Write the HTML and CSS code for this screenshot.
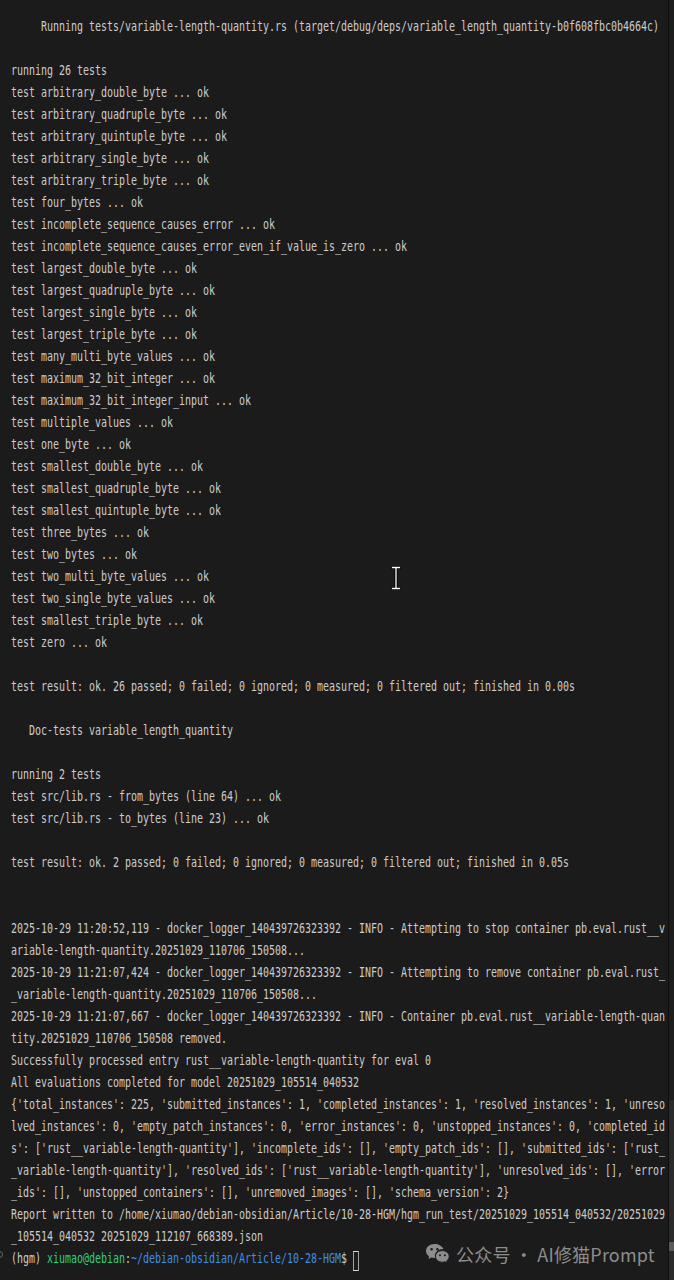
FILE: index.html
```html
<!DOCTYPE html>
<html lang="en">
<head>
<meta charset="utf-8">
<title>Terminal</title>
<link rel="stylesheet" href="styles.css">
</head>
<body>
<div class="window">
  <div class="screen">
    <div class="ln">     Running tests/variable-length-quantity.rs (target/debug/deps/variable_length_quantity-b0f608fbc0b4664c)</div>
    <div class="ln"></div>
    <div class="ln">running 26 tests</div>
    <div class="ln">test arbitrary_double_byte ... ok</div>
    <div class="ln">test arbitrary_quadruple_byte ... ok</div>
    <div class="ln">test arbitrary_quintuple_byte ... ok</div>
    <div class="ln">test arbitrary_single_byte ... ok</div>
    <div class="ln">test arbitrary_triple_byte ... ok</div>
    <div class="ln">test four_bytes ... ok</div>
    <div class="ln">test incomplete_sequence_causes_error ... ok</div>
    <div class="ln">test incomplete_sequence_causes_error_even_if_value_is_zero ... ok</div>
    <div class="ln">test largest_double_byte ... ok</div>
    <div class="ln">test largest_quadruple_byte ... ok</div>
    <div class="ln">test largest_single_byte ... ok</div>
    <div class="ln">test largest_triple_byte ... ok</div>
    <div class="ln">test many_multi_byte_values ... ok</div>
    <div class="ln">test maximum_32_bit_integer ... ok</div>
    <div class="ln">test maximum_32_bit_integer_input ... ok</div>
    <div class="ln">test multiple_values ... ok</div>
    <div class="ln">test one_byte ... ok</div>
    <div class="ln">test smallest_double_byte ... ok</div>
    <div class="ln">test smallest_quadruple_byte ... ok</div>
    <div class="ln">test smallest_quintuple_byte ... ok</div>
    <div class="ln">test three_bytes ... ok</div>
    <div class="ln">test two_bytes ... ok</div>
    <div class="ln">test two_multi_byte_values ... ok</div>
    <div class="ln">test two_single_byte_values ... ok</div>
    <div class="ln">test smallest_triple_byte ... ok</div>
    <div class="ln">test zero ... ok</div>
    <div class="ln"></div>
    <div class="ln">test result: ok. 26 passed; 0 failed; 0 ignored; 0 measured; 0 filtered out; finished in 0.00s</div>
    <div class="ln"></div>
    <div class="ln">   Doc-tests variable_length_quantity</div>
    <div class="ln"></div>
    <div class="ln">running 2 tests</div>
    <div class="ln">test src/lib.rs - from_bytes (line 64) ... ok</div>
    <div class="ln">test src/lib.rs - to_bytes (line 23) ... ok</div>
    <div class="ln"></div>
    <div class="ln">test result: ok. 2 passed; 0 failed; 0 ignored; 0 measured; 0 filtered out; finished in 0.05s</div>
    <div class="ln"></div>
    <div class="ln"></div>
    <div class="ln">2025-10-29 11:20:52,119 - docker_logger_140439726323392 - INFO - Attempting to stop container pb.eval.rust__v</div>
    <div class="ln">ariable-length-quantity.20251029_110706_150508...</div>
    <div class="ln">2025-10-29 11:21:07,424 - docker_logger_140439726323392 - INFO - Attempting to remove container pb.eval.rust_</div>
    <div class="ln">_variable-length-quantity.20251029_110706_150508...</div>
    <div class="ln">2025-10-29 11:21:07,667 - docker_logger_140439726323392 - INFO - Container pb.eval.rust__variable-length-quan</div>
    <div class="ln">tity.20251029_110706_150508 removed.</div>
    <div class="ln">Successfully processed entry rust__variable-length-quantity for eval 0</div>
    <div class="ln">All evaluations completed for model 20251029_105514_040532</div>
    <div class="ln">{'total_instances': 225, 'submitted_instances': 1, 'completed_instances': 1, 'resolved_instances': 1, 'unreso</div>
    <div class="ln">lved_instances': 0, 'empty_patch_instances': 0, 'error_instances': 0, 'unstopped_instances': 0, 'completed_id</div>
    <div class="ln">s': ['rust__variable-length-quantity'], 'incomplete_ids': [], 'empty_patch_ids': [], 'submitted_ids': ['rust_</div>
    <div class="ln">_variable-length-quantity'], 'resolved_ids': ['rust__variable-length-quantity'], 'unresolved_ids': [], 'error</div>
    <div class="ln">_ids': [], 'unstopped_containers': [], 'unremoved_images': [], 'schema_version': 2}</div>
    <div class="ln">Report written to /home/xiumao/debian-obsidian/Article/10-28-HGM/hgm_run_test/20251029_105514_040532/20251029</div>
    <div class="ln">_105514_040532 20251029_112107_668389.json</div>
    <div class="ln prompt">(hgm) <span class="user">xiumao@debian</span>:<span class="path">~/debian-obsidian/Article/10-28-HGM</span>$ <span class="cursor"> </span></div>
  </div>

  <span class="mark"></span>

  <div class="scrollbar"><div class="thumb"></div></div>

  <svg class="ibeam" width="10" height="24" viewBox="0 0 10 24" aria-hidden="true">
    <path d="M1.5 1.5h7M5 1.5v21M1.5 22.5h7" fill="none" stroke="#000" stroke-width="3.2" stroke-linecap="square"/>
    <path d="M1.5 1.5h7M5 1.5v21M1.5 22.5h7" fill="none" stroke="#fff" stroke-width="1.3" stroke-linecap="square"/>
  </svg>

  <div class="watermark">
    <svg class="wx" width="25" height="22" viewBox="0 0 25 22" aria-hidden="true">
      <path d="M9.5 1C4.8 1 1 4.1 1 8c0 2.2 1.2 4.1 3.1 5.4L3.4 16l2.9-1.6c1 .3 2.1.5 3.2.5h.7a6.3 6.3 0 0 1-.3-1.8c0-3.9 3.6-7 8.1-7h.6C17.1 3.1 13.6 1 9.5 1z" fill="#8d8d8d"/>
      <circle cx="6.6" cy="6.2" r="1.2" fill="#1b1b1b"/>
      <circle cx="12.4" cy="6.2" r="1.2" fill="#1b1b1b"/>
      <path d="M17.3 7.6c-3.8 0-6.8 2.6-6.8 5.8s3 5.8 6.8 5.8c.9 0 1.7-.1 2.5-.4l2.4 1.3-.6-2.1c1.6-1.1 2.6-2.7 2.6-4.6 0-3.2-3.1-5.8-6.9-5.8z" fill="#8d8d8d" stroke="#1b1b1b" stroke-width="1"/>
      <circle cx="15" cy="12.2" r="1" fill="#1b1b1b"/>
      <circle cx="19.8" cy="12.2" r="1" fill="#1b1b1b"/>
    </svg>
    <span class="wx-text">公众号 · AI修猫Prompt</span>
  </div>
</div>
</body>
</html>
```

FILE: styles.css
```css
html, body {
  margin: 0;
  padding: 0;
  background: #1b1b1b;
  overflow: hidden;
}

.window {
  position: relative;
  width: 674px;
  height: 1280px;
  background: #1b1b1b;
  overflow: hidden;
}

.screen {
  padding: 15px 0 0 15.4px;
  width: 930px;
  transform: scaleX(0.712);
  transform-origin: 0 0;
  font-family: "DejaVu Sans Mono", "Liberation Mono", monospace;
  font-size: 14px;
  color: #cccccc;
}

.ln {
  height: 22px;
  line-height: 22px;
  white-space: pre;
}

.user {
  color: #2fce7f;
}

.path {
  color: #3d8ee6;
}

.cursor {
  display: inline-block;
  width: 8.5px;
  height: 20px;
  vertical-align: -5px;
  box-sizing: border-box;
  border: 1.4px solid #d8d8d8;
}

.mark {
  position: absolute;
  left: -4px;
  top: 1251px;
  width: 5px;
  height: 5px;
  border: 1px solid #6a6a6a;
  border-radius: 50%;
}

.scrollbar {
  position: absolute;
  right: 0;
  top: 0;
  width: 5px;
  height: 1280px;
  border-left: 1px solid #0e0e0e;
  background: linear-gradient(#1d1d1d 0, #1d1d1d 1100px, #2a2a2a 1100px);
}

.thumb {
  position: absolute;
  left: 0;
  top: 1242px;
  width: 5px;
  height: 9px;
  background: #5a5a5a;
}

.ibeam {
  position: absolute;
  left: 391px;
  top: 566px;
}

.watermark {
  position: absolute;
  left: 425px;
  top: 1240px;
  display: flex;
  align-items: center;
  gap: 6px;
  height: 28px;
}

.wx-text {
  font-family: "Noto Sans CJK SC", "Noto Sans", sans-serif;
  font-size: 18px;
  color: #8d8d8d;
  letter-spacing: 0.2px;
}
```
